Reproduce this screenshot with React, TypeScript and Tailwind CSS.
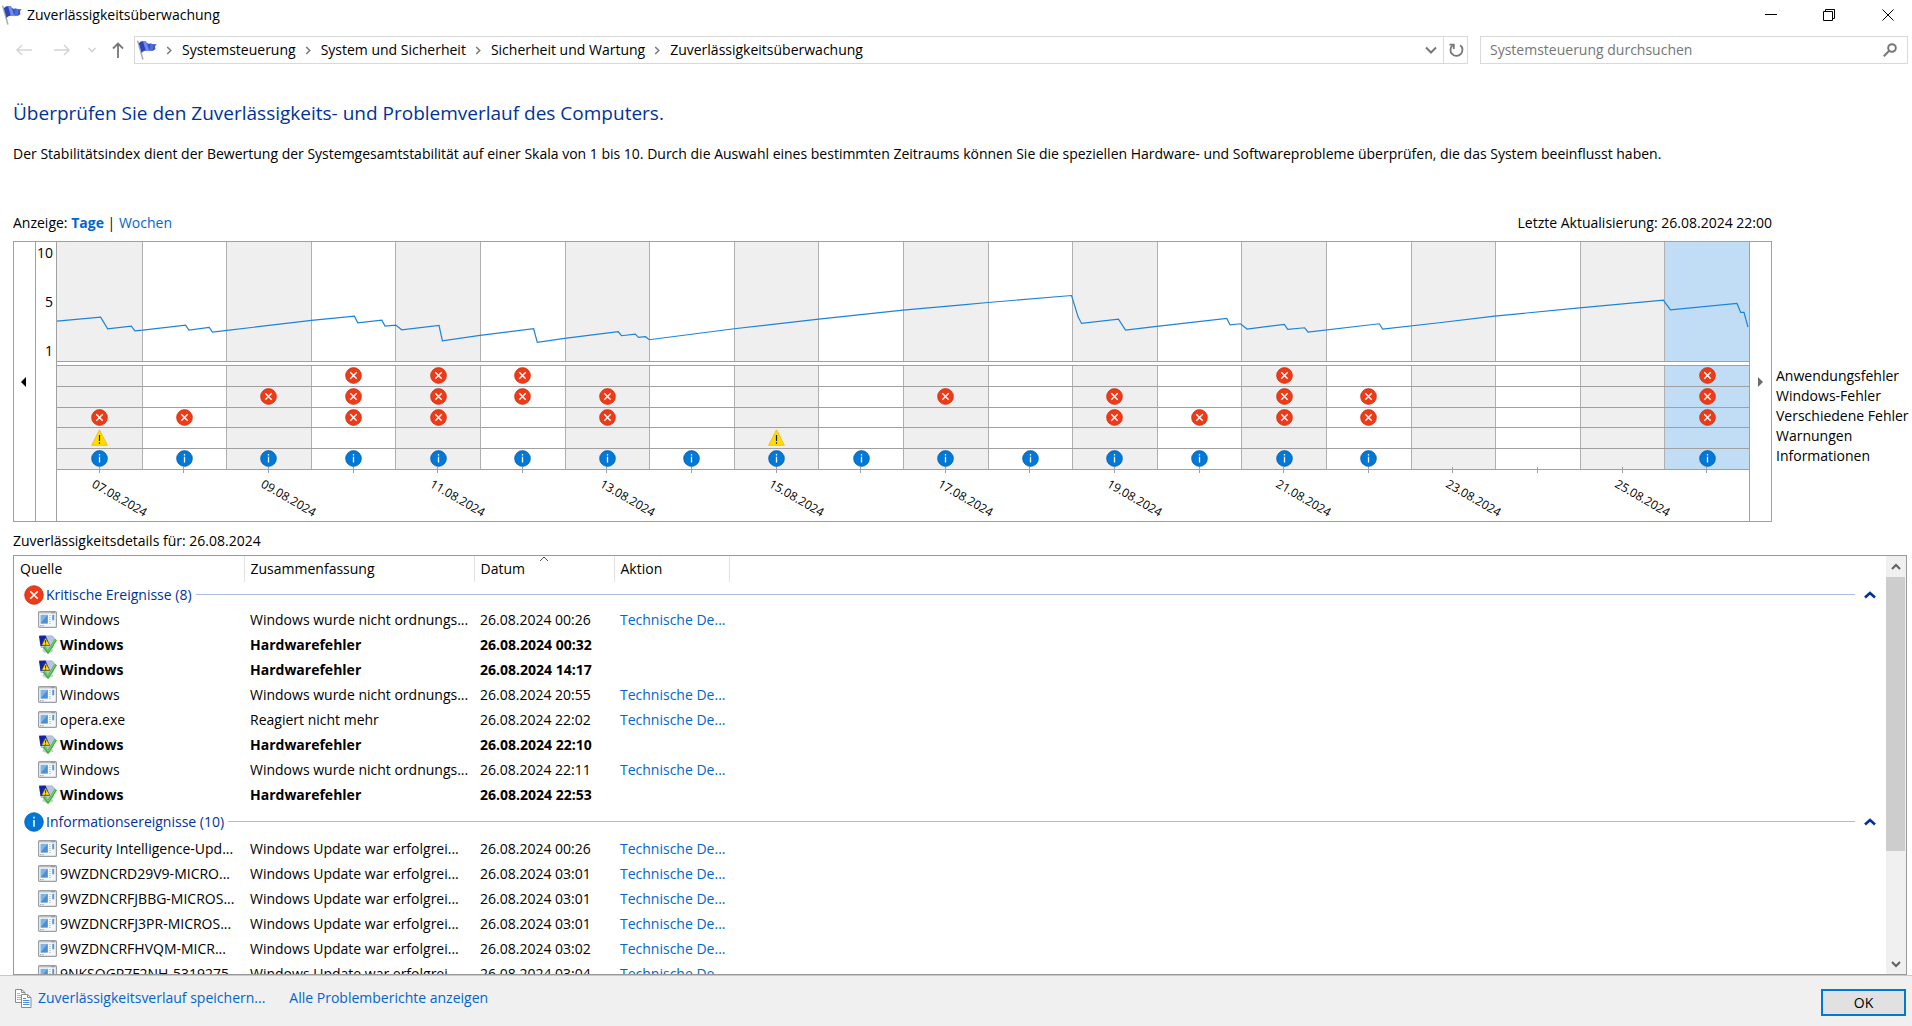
import React, { useState } from 'react';

type Mark = 'error' | 'warning' | 'info';

interface EventEntry {
  source: string;
  summary: string;
  date: string;
  unsolved?: boolean;
}

interface EventGroup {
  title: string;
  icon: Mark;
  entries: EventEntry[];
}

const FIRST_DAY = 7;
const DAY_COUNT = 20;
const SELECTED_DAY = 26;

const dayLabel = (day: number) => `${String(day).padStart(2, '0')}.08.2024`;

const days = Array.from({ length: DAY_COUNT }, (_, i) => FIRST_DAY + i);

// days of august on which each category has an entry
const categories: { name: string; mark: Mark; days: number[] }[] = [
  { name: 'Anwendungsfehler', mark: 'error', days: [10, 11, 12, 21, 26] },
  { name: 'Windows-Fehler', mark: 'error', days: [9, 10, 11, 12, 13, 17, 19, 21, 22, 26] },
  { name: 'Verschiedene Fehler', mark: 'error', days: [7, 8, 10, 11, 13, 19, 20, 21, 22, 26] },
  { name: 'Warnungen', mark: 'warning', days: [7, 15] },
  { name: 'Informationen', mark: 'info', days: [7, 8, 9, 10, 11, 12, 13, 14, 15, 16, 17, 18, 19, 20, 21, 22, 26] },
];

const stabilityIndex = [
  '170,274 301,262 322,297 393,289 404,303 428,301 556,286 566,301 627,293 637,307 680,302 934,272',
  '1063,259 1073,279 1145,271 1155,289 1187,286 1205,300 1317,287 1327,333 1440,317 1601,297 1612,338',
  '1694,326 1855,306 1865,318 1906,313 1916,323 1937,321 1948,330 2203,297 2457,268 2710,241 2880,226',
  '2965,218 3216,197 3236,262 3246,281 3357,268 3378,301 3472,290 3682,266 3692,285 3723,282 3743,298',
  '3855,284 3865,299 3916,294 3926,307 4140,282 4150,298 4320,279 4486,259 4741,234 4993,211 5014,240',
  '5214,221 5225,248 5235,248 5247,292',
].join(' ');

const NOT_SHUT_DOWN = 'Windows wurde nicht ordnungs...';
const UPDATED = 'Windows Update war erfolgrei...';

const groups: EventGroup[] = [
  {
    title: 'Kritische Ereignisse (8)',
    icon: 'error',
    entries: [
      { source: 'Windows', summary: NOT_SHUT_DOWN, date: '26.08.2024 00:26' },
      { source: 'Windows', summary: 'Hardwarefehler', date: '26.08.2024 00:32', unsolved: true },
      { source: 'Windows', summary: 'Hardwarefehler', date: '26.08.2024 14:17', unsolved: true },
      { source: 'Windows', summary: NOT_SHUT_DOWN, date: '26.08.2024 20:55' },
      { source: 'opera.exe', summary: 'Reagiert nicht mehr', date: '26.08.2024 22:02' },
      { source: 'Windows', summary: 'Hardwarefehler', date: '26.08.2024 22:10', unsolved: true },
      { source: 'Windows', summary: NOT_SHUT_DOWN, date: '26.08.2024 22:11' },
      { source: 'Windows', summary: 'Hardwarefehler', date: '26.08.2024 22:53', unsolved: true },
    ],
  },
  {
    title: 'Informationsereignisse (10)',
    icon: 'info',
    entries: [
      { source: 'Security Intelligence-Upd...', summary: UPDATED, date: '26.08.2024 00:26' },
      { source: '9WZDNCRD29V9-MICRO...', summary: UPDATED, date: '26.08.2024 03:01' },
      { source: '9WZDNCRFJBBG-MICROS...', summary: UPDATED, date: '26.08.2024 03:01' },
      { source: '9WZDNCRFJ3PR-MICROS...', summary: UPDATED, date: '26.08.2024 03:01' },
      { source: '9WZDNCRFHVQM-MICR...', summary: UPDATED, date: '26.08.2024 03:02' },
      { source: '9NKSQGP7F2NH-5319275...', summary: UPDATED, date: '26.08.2024 03:04' },
    ],
  },
];

const MarkIcon: React.FC<{ mark: Mark; className?: string }> = ({ mark, className = 'size-[17px]' }) => {
  if (mark === 'warning') {
    return (
      <svg viewBox="0 0 17 17" className={className} aria-label="Warnung">
        <path d="M8.5 .8 16.4 16.3H.6z" fill="#ffdd00" stroke="#f5b800" strokeWidth=".8" />
        <path d="M8.5 6v6M8.5 13.2v1.6" stroke="#1a1a1a" strokeWidth="1.2" />
      </svg>
    );
  }
  if (mark === 'info') {
    return (
      <svg viewBox="0 0 17 17" className={className} aria-label="Information">
        <circle cx="8.5" cy="8.5" r="7.9" fill="#0078d7" stroke="#0a5ea8" strokeWidth=".7" />
        <path d="M8.5 6.8v5.8M8.5 4v1.6" stroke="#fff" strokeWidth="1.3" />
      </svg>
    );
  }
  return (
    <svg viewBox="0 0 17 17" className={className} aria-label="Fehler">
      <circle cx="8.5" cy="8.5" r="7.9" fill="#f03a17" stroke="#c4300f" strokeWidth=".7" />
      <path d="m5.3 5.3 6.4 6.4m0-6.4-6.4 6.4" stroke="#fff" strokeWidth="1.4" />
    </svg>
  );
};

const FlagIcon: React.FC = () => (
  <svg viewBox="0 0 20 20" className="size-5 shrink-0" aria-hidden="true">
    <path d="M.8 1.200 5.800 19" stroke="#a9adb3" strokeWidth="1.500" strokeLinecap="round" />
    <path d="M1.800 3.200C4 .8 6.500.4 9 1.600l3.400 9.600C9.800 10 7 10.400 4.600 13z" fill="#2d45b8" />
    <path d="M6 1.200C7.400.8 8.200 1.200 9 1.600l3.400 9.600c-1.200-.6-2.400-.7-3.600-.4z" fill="#6f8cea" />
    <path d="M9.500 2.400c1.300 1.200 2.500 1.500 4 1.200 2 .8 4.100.9 6.300.3-1.900 1.700-2.200 3.200-1.300 5-1.900 2-4.200 2.500-6.500 1.400z" fill="#3653c8" />
    <path d="M13.500 3.600c1.200.5 2.200.7 3.400.7l-1.200 6.200c-1.100.2-2.200 0-3.200-.5z" fill="#4f6cda" />
  </svg>
);

const ProgramIcon: React.FC = () => (
  <svg viewBox="0 0 19 17" className="h-[17px] w-[19px] shrink-0" aria-hidden="true">
    <rect x=".6" y=".6" width="17.800" height="15.800" rx="1" fill="#f7f8f9" stroke="#9a9ea4" strokeWidth="1.200" />
    <path d="M1.200 1.700h16.600" stroke="#b9bdc3" strokeWidth="1.400" />
    <path d="M13.500 1.700h3" stroke="#555a61" strokeWidth=".8" strokeDasharray="1 1" />
    <rect x="2.500" y="3.800" width="7.200" height="8.600" fill="#7db5e6" />
    <path d="M2.500 12.400 9.700 3.800v8.600z" fill="#4d8fd0" />
    <path d="M11 4.500h2M11 6.500h2M11 8.500h2M11 10.500h2M11 12.500h2" stroke="#bfc4ca" strokeWidth=".8" />
    <rect x="14.200" y="3.800" width="2" height="5.500" fill="#5b9bd8" />
    <path d="M2 14.700h4" stroke="#85898f" strokeWidth=".9" strokeDasharray="1.300 1" />
  </svg>
);

const HardwareIcon: React.FC = () => (
  <svg viewBox="0 0 19 19" className="h-[19px] w-[19px] shrink-0" aria-hidden="true">
    <path d="M5 13h9l1.500 3.500-6 2-5-2z" fill="#c9ccd1" />
    <path d="M1.500 1 14 .8 16.500 3l-1.500 9.500L3 12.500z" fill="#b9c4e4" stroke="#9aa3bd" strokeWidth=".6" />
    <path d="M1 .8 7.500.6 12 10.800 2.500 11z" fill="#1226a4" />
    <path d="M7.500 3 11.800 10.200H3.800z" fill="#ffdb1f" stroke="#7a6700" strokeWidth=".5" />
    <path d="M7.600 5.300v2.600M7.600 8.600v1" stroke="#222" strokeWidth="1" />
    <path d="m6 11.800 4 5.200L18 4.500" fill="none" stroke="#35b235" strokeWidth="2.600" />
    <path d="m6.500 11.800 3.700 4.400L17.300 5" fill="none" stroke="#86e065" strokeWidth=".9" />
  </svg>
);

const CopyIcon: React.FC = () => (
  <svg viewBox="0 0 17 19" className="h-[19px] w-[17px] shrink-0" fill="#fff" stroke="#8a8a8a" aria-hidden="true">
    <path d="M.5.5h6l3.500 3v10H.5z" />
    <path d="M6.500.5v3H10" fill="none" />
    <path d="M2 4.500h3M2 6.500h4M2 8.500h4M2 10.500h4" stroke="#8fbbe6" />
    <path d="M6.500 5.500h6l3.500 3v10H6.500z" />
    <path d="M12.500 5.500v3H16" fill="none" />
    <path d="M8 9.500h3M8 11.500h6.500M8 13.500h6.500M8 15.500h6.500" stroke="#4a8fd4" />
  </svg>
);

const Crumb: React.FC<{ children: string }> = ({ children }) => (
  <li className="flex items-center">
    <svg viewBox="0 0 6 10" className="mr-[10px] h-[9px] w-[6px]" fill="none" stroke="#767676" strokeWidth="1.600" aria-hidden="true">
      <path d="m1 1 4 4-4 4" />
    </svg>
    <a href="#" className="mr-[9px]">{children}</a>
  </li>
);

const TitleBar: React.FC = () => (
  <header className="flex h-[30px] shrink-0 items-center pl-[2px]">
    <FlagIcon />
    <h1 className="ml-[5px] flex-1 text-[14px]">Zuverlässigkeitsüberwachung</h1>
    <div className="flex h-full">
      <button aria-label="Minimieren" className="flex w-[58px] items-center justify-center">
        <svg viewBox="0 0 12 12" className="size-3" stroke="#000"><path d="M0 5.500h12" /></svg>
      </button>
      <button aria-label="Verkleinern" className="flex w-[58px] items-center justify-center">
        <svg viewBox="0 0 12 12" className="size-3" fill="none" stroke="#000">
          <path d="M.5 2.500h9v9h-9zM2.500 2.500v-2h9v9h-2" />
        </svg>
      </button>
      <button aria-label="Schließen" className="flex w-[54px] items-center justify-center pl-[6px]">
        <svg viewBox="0 0 12 12" className="size-3" stroke="#000"><path d="m.5.5 11 11m0-11-11 11" /></svg>
      </button>
    </div>
  </header>
);

const NavigationBar: React.FC = () => {
  const [query, setQuery] = useState('');

  return (
    <div className="flex shrink-0 items-center pt-[6px] pr-1">
      <div className="flex w-[134px] items-center pl-4">
        <button aria-label="Zurück" className="w-[38px]">
          <svg viewBox="0 0 16 12" className="h-3 w-4" fill="none" stroke="#d4d4d4" strokeWidth="1.500">
            <path d="M16 6H1M6 1 1 6l5 5" />
          </svg>
        </button>
        <button aria-label="Vorwärts" className="w-[34px]">
          <svg viewBox="0 0 16 12" className="h-3 w-4" fill="none" stroke="#d4d4d4" strokeWidth="1.500">
            <path d="M0 6h15M10 1l5 5-5 5" />
          </svg>
        </button>
        <button aria-label="Zuletzt besucht" className="w-[24px]">
          <svg viewBox="0 0 8 6" className="h-[6px] w-2" fill="none" stroke="#cfcfcf" strokeWidth="1.500">
            <path d="m.5 1 3.500 3.500L7.500 1" />
          </svg>
        </button>
        <button aria-label="Nach oben">
          <svg viewBox="0 0 12 16" className="h-4 w-3" fill="none" stroke="#777" strokeWidth="1.800">
            <path d="M6 16V1.500M1 6.500l5-5 5 5" />
          </svg>
        </button>
      </div>
      <nav aria-label="Adresse" className="flex h-7 flex-1 items-center border border-[#d9d9d9] pl-[2px]">
        <FlagIcon />
        <ol className="ml-[9px] flex flex-1">
          <Crumb>Systemsteuerung</Crumb>
          <Crumb>System und Sicherheit</Crumb>
          <Crumb>Sicherheit und Wartung</Crumb>
          <Crumb>Zuverlässigkeitsüberwachung</Crumb>
        </ol>
        <button aria-label="Vorherige Orte" className="flex w-6 items-center justify-center">
          <svg viewBox="0 0 12 8" className="h-2 w-3" fill="none" stroke="#777" strokeWidth="2">
            <path d="m1 1.500 5 5 5-5" />
          </svg>
        </button>
        <button aria-label="Aktualisieren" className="flex h-full w-6 items-center justify-center border-l border-[#d9d9d9]">
          <svg viewBox="0 0 16 16" className="size-4" fill="none" stroke="#777" strokeWidth="1.800">
            <path d="M12.200 3.200A6 6 0 1 1 4.500 3.400" />
            <path d="M1.500 2.600h4.300v4.300" />
          </svg>
        </button>
      </nav>
      <form className="ml-3 flex h-7 w-[428px] items-center border border-[#d9d9d9] pr-[10px] pl-[9px]">
        <input
          type="search"
          aria-label="Systemsteuerung durchsuchen"
          placeholder="Systemsteuerung durchsuchen"
          value={query}
          onChange={(e) => setQuery(e.target.value)}
          className="min-w-0 flex-1 outline-none placeholder:text-[#767676]"
        />
        <svg viewBox="0 0 14 14" className="size-[14px]" fill="none" stroke="#777" strokeWidth="2" aria-hidden="true">
          <circle cx="9" cy="5" r="3.800" />
          <path d="M6.200 7.800.8 13.200" />
        </svg>
      </form>
    </div>
  );
};

const dayBackground = (day: number) => {
  if (day === SELECTED_DAY) return 'bg-[#c0ddf5]';
  return day % 2 === 1 ? 'bg-[#efefef]' : 'bg-white';
};

const StabilityChart: React.FC = () => (
  <div className="flex shrink-0 pl-[13px]">
    <div className="flex h-[281px] min-w-0 flex-1 border border-[#a0a0a0]">
      <button aria-label="Frühere Tage" className="flex w-[22px] items-center justify-center border-r border-[#a0a0a0] pr-[2px]">
        <svg viewBox="0 0 5 10" className="h-[10px] w-[5px]"><path d="M5 0v10L0 5z" /></svg>
      </button>
      <div className="flex h-[120px] w-5 flex-col justify-between py-[1px] pr-[3px] text-right leading-[20px]">
        <span>10</span>
        <span>5</span>
        <span>1</span>
      </div>
      <div className="flex min-w-0 flex-1 flex-col border-x border-[#a0a0a0]">
        <div className="relative grid h-[120px] grid-cols-20 border-b border-[#a0a0a0]">
          {days.map((day) => (
            <div key={day} className={`border-l border-[#b0b0b0] first:border-l-0 ${dayBackground(day)}`} />
          ))}
          <svg
            viewBox="170 36 5080 358"
            preserveAspectRatio="none"
            className="absolute inset-0 size-full"
            role="img"
            aria-label="Stabilitätsindex"
          >
            <polyline points={stabilityIndex} fill="none" stroke="#1b84d8" strokeWidth="1.200" vectorEffect="non-scaling-stroke" />
          </svg>
        </div>
        <div className="mt-[3px] grid h-[105px] grid-rows-5 border-t border-[#a0a0a0]">
          {categories.map((category) => (
            <div key={category.name} className="grid grid-cols-20 border-b border-[#a0a0a0]">
              {days.map((day) => (
                <div
                  key={day}
                  className={`flex items-start justify-center border-l border-[#b0b0b0] pt-px first:border-l-0 ${dayBackground(day)}`}
                >
                  {category.days.includes(day) && <MarkIcon mark={category.mark} />}
                </div>
              ))}
            </div>
          ))}
        </div>
        <div className="grid grid-cols-20">
          {days.map((day) => (
            <div key={day} className="flex flex-col">
              <span className="-mt-[3px] h-[6px] w-px self-center bg-[#a0a0a0]" />
              {day % 2 === 1 && (
                <span className="mt-[3px] ml-10 w-16 origin-top-left rotate-30 text-[12px] leading-4">{dayLabel(day)}</span>
              )}
            </div>
          ))}
        </div>
      </div>
      <button aria-label="Spätere Tage" className="flex w-[21px] items-center justify-center">
        <svg viewBox="0 0 5 10" className="h-[10px] w-[5px]" fill="#6d6d6d"><path d="M0 0v10l5-5z" /></svg>
      </button>
    </div>
    <ul className="w-[140px] shrink-0 pt-[125px] pl-1 leading-[20px] whitespace-nowrap">
      {categories.map((category) => (
        <li key={category.name}>{category.name}</li>
      ))}
    </ul>
  </div>
);

const EventRow: React.FC<{ entry: EventEntry }> = ({ entry }) => (
  <tr className={`h-[25px] ${entry.unsolved ? 'font-bold' : ''}`}>
    <td className="p-0">
      <div className="flex items-center gap-[3px] pl-6">
        {entry.unsolved ? <HardwareIcon /> : <ProgramIcon />}
        {entry.source}
      </div>
    </td>
    <td className="p-0 pl-[6px]">{entry.summary}</td>
    <td className="p-0 pl-[6px]">{entry.date}</td>
    <td className="p-0 pl-[6px]">
      {!entry.unsolved && <a href="#" className="text-[#0066cc]">Technische De...</a>}
    </td>
    <td />
  </tr>
);

const EventList: React.FC = () => {
  const [collapsed, setCollapsed] = useState<string[]>([]);

  const toggle = (title: string) => {
    setCollapsed((old) => (old.includes(title) ? old.filter((t) => t !== title) : [...old, title]));
  };

  return (
    <div className="mr-[5px] ml-[13px] flex min-h-0 flex-1 border border-[#999]">
      <div className="min-w-0 flex-1 overflow-hidden">
        <table className="w-full table-fixed border-collapse whitespace-nowrap">
          <colgroup>
            <col className="w-[230px]" />
            <col className="w-[230px]" />
            <col className="w-[140px]" />
            <col className="w-[115px]" />
            <col />
          </colgroup>
          <thead>
            <tr className="h-[26px] text-left">
              <th className="border-r border-[#e2e2e2] p-0 pl-[6px] font-normal">Quelle</th>
              <th className="border-r border-[#e2e2e2] p-0 pl-[6px] font-normal">Zusammenfassung</th>
              <th aria-sort="ascending" className="relative border-r border-[#e2e2e2] p-0 pl-[6px] font-normal">
                Datum
                <svg viewBox="0 0 10 6" className="absolute top-0 left-1/2 h-[6px] w-[10px] -translate-x-1/2" fill="none" stroke="#555">
                  <path d="m1 5 4-4 4 4" />
                </svg>
              </th>
              <th className="border-r border-[#e2e2e2] p-0 pl-[6px] font-normal">Aktion</th>
              <th />
            </tr>
          </thead>
          {groups.map((group, index) => (
            <tbody key={group.title}>
              <tr className={index === 0 ? 'h-[25px]' : 'h-[29px]'}>
                <th colSpan={5} className="p-0 font-normal">
                  <div className="flex items-center pr-[10px] pl-[10px] text-[#003399]">
                    <MarkIcon mark={group.icon} className="size-5" />
                    <span className="ml-[2px]">{group.title}</span>
                    <span className="mr-[9px] ml-1 h-px flex-1 bg-[#aabfe0]" />
                    <button aria-label={group.title} onClick={() => toggle(group.title)}>
                      <svg viewBox="0 0 12 8" className="h-2 w-3" fill="none" stroke="#003399" strokeWidth="2.600">
                        <path d="m1 6.500 5-4.500 5 4.500" />
                      </svg>
                    </button>
                  </div>
                </th>
              </tr>
              {!collapsed.includes(group.title) &&
                group.entries.map((entry, i) => <EventRow key={i} entry={entry} />)}
            </tbody>
          ))}
        </table>
      </div>
      <div className="flex w-5 flex-col items-center bg-[#f0f0f0]">
        <button aria-label="Nach oben scrollen" className="flex h-[21px] w-full items-center justify-center">
          <svg viewBox="0 0 10 8" className="h-2 w-[10px]" fill="none" stroke="#606060" strokeWidth="2">
            <path d="m1 6 4-4 4 4" />
          </svg>
        </button>
        <div className="flex w-full flex-1 flex-col pr-px">
          <div className="h-[73%] bg-[#cdcdcd]" />
        </div>
        <button aria-label="Nach unten scrollen" className="flex h-[21px] w-full items-center justify-center">
          <svg viewBox="0 0 10 8" className="h-2 w-[10px]" fill="none" stroke="#606060" strokeWidth="2">
            <path d="m1 2 4 4 4-4" />
          </svg>
        </button>
      </div>
    </div>
  );
};

export default function App() {
  return (
    <div className="flex h-screen flex-col bg-white font-['Open_Sans','Noto_Sans',sans-serif] text-[14px] leading-[20px] text-black">
      <TitleBar />
      <NavigationBar />
      <main className="flex min-h-0 flex-1 flex-col">
        <h2 className="mt-9 ml-[13px] text-[19px] leading-[26px] text-[#003399]">
          Überprüfen Sie den Zuverlässigkeits- und Problemverlauf des Computers.
        </h2>
        <p className="mt-[18px] ml-[13px]">
          Der Stabilitätsindex dient der Bewertung der Systemgesamtstabilität auf einer Skala von 1 bis 10. Durch die Auswahl eines
          bestimmten Zeitraums können Sie die speziellen Hardware- und Softwareprobleme überprüfen, die das System beeinflusst haben.
        </p>
        <div className="mt-[49px] mr-[140px] mb-2 ml-[13px] flex justify-between">
          <p>
            Anzeige: <a href="#" className="font-bold text-[#0066cc]">Tage</a> |{' '}
            <a href="#" className="text-[#0066cc]">Wochen</a>
          </p>
          <p>Letzte Aktualisierung: 26.08.2024 22:00</p>
        </div>
        <StabilityChart />
        <p className="mt-[9px] mb-1 ml-[13px]">Zuverlässigkeitsdetails für: 26.08.2024</p>
        <EventList />
      </main>
      <footer className="flex h-[51px] shrink-0 items-start border-t border-[#c8c8c8] bg-[#f0f0f0] pr-[6px] pl-[15px] text-[#0066cc]">
        <div className="mt-3 flex items-center gap-[6px]">
          <CopyIcon />
          <a href="#">Zuverlässigkeitsverlauf speichern...</a>
          <a href="#" className="ml-[18px]">Alle Problemberichte anzeigen</a>
        </div>
        <button className="mt-[13px] ml-auto h-[27px] w-[85px] border-2 border-[#0078d7] bg-[#e1e1e1] text-black">OK</button>
      </footer>
    </div>
  );
}
